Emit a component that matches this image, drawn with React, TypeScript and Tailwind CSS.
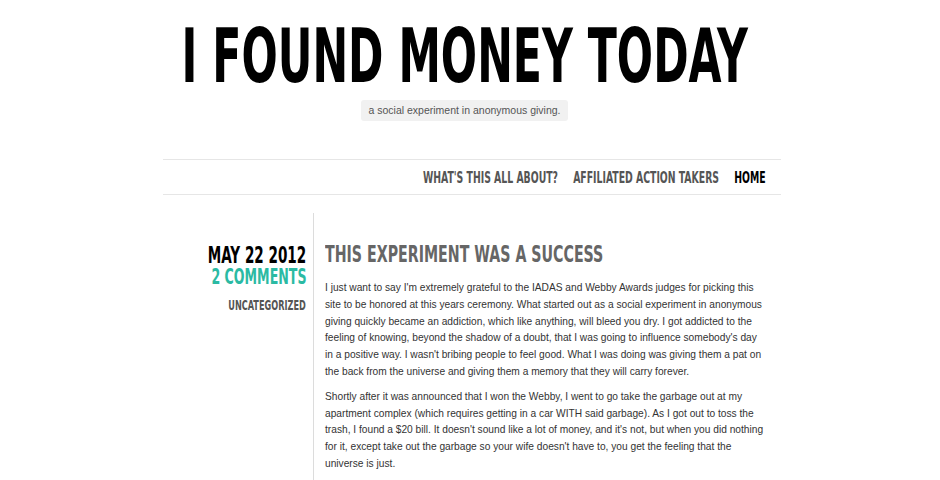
import React from 'react';

const condensed = { fontFamily: '"DejaVu Sans Condensed", "DejaVu Sans", sans-serif' };
const body = { fontFamily: '"Liberation Sans", Arial, sans-serif' };

const navItems = [
  { label: "WHAT'S THIS ALL ABOUT?", active: false },
  { label: 'AFFILIATED ACTION TAKERS', active: false },
  { label: 'HOME', active: true },
];

const paragraphs = [
  "I just want to say I'm extremely grateful to the IADAS and Webby Awards judges for picking this site to be honored at this years ceremony. What started out as a social experiment in anonymous giving quickly became an addiction, which like anything, will bleed you dry. I got addicted to the feeling of knowing, beyond the shadow of a doubt, that I was going to influence somebody's day in a positive way. I wasn't bribing people to feel good. What I was doing was giving them a pat on the back from the universe and giving them a memory that they will carry forever.",
  "Shortly after it was announced that I won the Webby, I went to go take the garbage out at my apartment complex (which requires getting in a car WITH said garbage). As I got out to toss the trash, I found a $20 bill. It doesn't sound like a lot of money, and it's not, but when you did nothing for it, except take out the garbage so your wife doesn't have to, you get the feeling that the universe is just.",
];

export default function App() {
  return (
    <div className="h-[480px] w-full overflow-hidden bg-white">
      {/* Header */}
      <header className="pr-[11px] pt-[22px]">
        <div className="flex justify-center">
          <h1
            className="shrink-0 origin-center scale-x-[0.641] whitespace-nowrap text-[74px] font-bold leading-[68px] text-black"
            style={condensed}
          >
            I FOUND MONEY TODAY
          </h1>
        </div>
        <div className="mt-[10px] flex justify-center">
          <span
            className="rounded-[3px] bg-[#f1f1f1] px-[7px] py-[3px] text-[10.5px] leading-[15px] text-[#555]"
            style={body}
          >
            a social experiment in anonymous giving.
          </span>
        </div>
      </header>

      <div className="pl-[4px]">
        <div className="mx-auto w-[618px]">
          {/* Navigation */}
          <nav className="mt-[38px] flex h-[36px] items-center justify-end border-y border-[#e6e6e6] pr-[15px] pt-[3px]">
            <div className="flex shrink-0 origin-right scale-x-[0.69] items-center gap-[22px]">
              {navItems.map((item) => (
                <a
                  key={item.label}
                  href="#"
                  className={`whitespace-nowrap text-[15px] font-bold leading-none ${item.active ? 'text-black' : 'text-[#555]'}`}
                  style={condensed}
                >
                  {item.label}
                </a>
              ))}
            </div>
          </nav>

          {/* Post */}
          <main className="mt-[18px] flex">
            <aside className="flex w-[150px] shrink-0 flex-col items-end pr-[7px] pt-[32px]" style={condensed}>
              <div className="origin-right scale-x-[0.655] whitespace-nowrap text-[23px] font-bold leading-[21px] text-black">
                MAY 22 2012
              </div>
              <div className="origin-right scale-x-[0.667] whitespace-nowrap text-[21px] font-bold leading-[22px] text-[#2bbaa3]">
                2 COMMENTS
              </div>
              <div className="mt-[8px] origin-right scale-x-[0.626] whitespace-nowrap text-[14.5px] font-bold leading-[18px] text-[#555]">
                UNCATEGORIZED
              </div>
            </aside>
            <article className="min-h-[300px] min-w-0 flex-1 border-l border-[#dcdcdc] pl-[11px] pr-[16px] pt-[27px]">
              <h2
                className="origin-left scale-x-[0.686] whitespace-nowrap text-[23px] font-bold leading-[28px] text-[#666]"
                style={condensed}
              >
                THIS EXPERIMENT WAS A SUCCESS
              </h2>
              <div className="mt-[12px] text-[10.2px] leading-[16.8px] text-[#333]" style={body}>
                {paragraphs.map((p, i) => (
                  <p key={i} className="mb-[8px]">
                    {p}
                  </p>
                ))}
              </div>
            </article>
          </main>
        </div>
      </div>
    </div>
  );
}
